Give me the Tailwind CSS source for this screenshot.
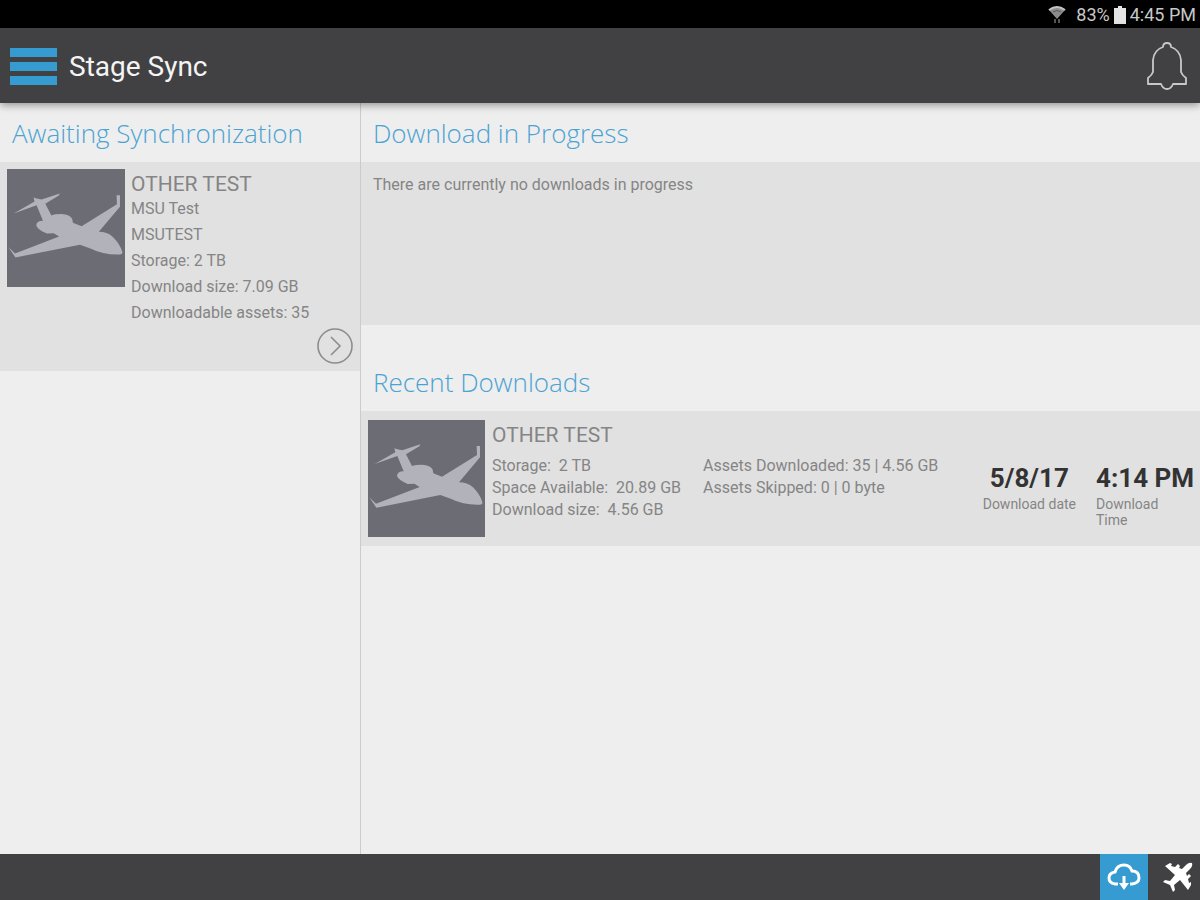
<!DOCTYPE html>
<html lang="en">
<head>
    <meta charset="UTF-8">
    <meta name="viewport" content="width=device-width, initial-scale=1.0">
    <title>Stage Sync</title>
    <!-- Tailwind CSS CDN -->
    <script src="https://cdn.jsdelivr.net/npm/@tailwindcss/browser@4"></script>
</head>
<body class="flex flex-col min-h-screen bg-[#eeeeee] font-['Roboto',sans-serif] text-[#858585]">
    <!-- Shared aircraft picture -->
    <svg class="hidden">
        <symbol id="jet" viewBox="0 0 351 351">
            <path fill="#b2b3ba" d="M20 132L82 97L79 85L88 88L103 91L157 73L154 79L114 103L132 138Q142 134 162 134Q188 136 194 149L196 160L222 170L327 105L326 78L336 78L336 112L273 187Q298 187 315 202Q336 223 343 246Q345 255 333 254Q285 255 250 237L217 225L25 263L4 232L24 251L155 201L139 191L119 192Q92 181 87 168Q87 154 107 154L88 108Z"/>
        </symbol>
    </svg>

    <!-- Status bar -->
    <div class="flex items-center justify-end h-7 px-1 pt-0.5 bg-black text-lg text-[#c8c8c8]">
        <svg class="w-5 h-5 mr-2" viewBox="0 0 20 20" fill="none">
            <path d="M1 5Q9 -1 17 5L9 14Z" fill="#8c8c8c"/>
            <path d="M1 5Q9 -1 17 5" stroke="#c4c4c4" stroke-width="2"/>
            <path d="M5 7Q9 4 13 7" stroke="#5a5a5a" stroke-width="1"/>
            <path d="M7 14V18M11 14V18" stroke="#555" stroke-width="2"/>
        </svg>
        <span>83%</span>
        <svg class="w-3 h-5 mx-1" viewBox="0 0 12 20" fill="#e4e4e4">
            <path d="M4 1H8V3H12V19H0V3H4Z"/>
        </svg>
        <span>4:45 PM</span>
    </div>

    <header class="relative z-10 flex items-center h-[75px] px-2.5 pt-0.5 bg-[#414143] shadow-[0_2px_8px_rgba(0,0,0,0.4)]">
        <button type="button" aria-label="Menu" class="flex flex-col gap-[5px] w-[47px]">
            <span class="h-[9px] w-full bg-[#359bd1]"></span>
            <span class="h-[9px] w-full bg-[#359bd1]"></span>
            <span class="h-[9px] w-full bg-[#359bd1]"></span>
        </button>
        <h1 class="ml-3 text-[28px] leading-9 text-[#f4f4f4]">Stage Sync</h1>
        <button type="button" aria-label="Notifications" class="ml-auto">
            <svg class="w-[44px] h-[50px]" viewBox="0 0 44 50" fill="none" stroke="#c8c8c8" stroke-width="1.8" stroke-linejoin="round">
                <path d="M17 5Q17 1 21 1Q25 1 25 5Q34 8 35 18V30Q36 33 40 36V42H27Q25 47 21 47Q17 47 15 42H2V36Q6 33 7 30V18Q8 8 17 5Z"/>
            </svg>
        </button>
    </header>

    <main class="flex flex-1">
        <section class="w-[30%] border-r border-[#cbcbcb] box-content">
            <h2 class="h-[59px] px-3 pt-3 font-['Open_Sans',sans-serif] font-light text-[26px] leading-9 text-[#4ba3d3]">Awaiting Synchronization</h2>
            <div class="flex flex-col bg-[#e1e1e1] px-[7px] py-[7px]">
                <div class="flex gap-1.5">
                    <svg class="size-[118px] bg-[#6b6c74]"><use href="#jet"/></svg>
                    <div class="pt-[3px] text-base leading-[26px]">
                        <h3 class="text-[21px] leading-6">OTHER TEST</h3>
                        <p>MSU Test</p>
                        <p>MSUTEST</p>
                        <p>Storage: 2 TB</p>
                        <p>Download size: 7.09 GB</p>
                        <p>Downloadable assets: 35</p>
                    </div>
                </div>
                <button type="button" aria-label="Open" class="self-end mt-0.5">
                    <svg class="size-9" viewBox="0 0 36 36" fill="none" stroke="#8d8d8d" stroke-width="1.6">
                        <circle cx="18" cy="18" r="17"/>
                        <path d="M14 9L23 18L14 27"/>
                    </svg>
                </button>
            </div>
        </section>

        <div class="flex-1">
            <section>
                <h2 class="h-[59px] px-3 pt-3 font-['Open_Sans',sans-serif] font-light text-[26px] leading-9 text-[#4ba3d3]">Download in Progress</h2>
                <p class="h-[163px] px-3 pt-3 bg-[#e1e1e1] text-base leading-[22px]">There are currently no downloads in progress</p>
            </section>
            <section class="pt-[27px]">
                <h2 class="h-[59px] px-3 pt-3 font-['Open_Sans',sans-serif] font-light text-[26px] leading-9 text-[#4ba3d3]">Recent Downloads</h2>
                <div class="flex bg-[#e1e1e1] pl-[7px] pr-2 py-2">
                    <svg class="size-[117px] my-px bg-[#6b6c74]"><use href="#jet"/></svg>
                    <div class="w-[211px] ml-[7px] pt-1 text-base leading-[22px]">
                        <h3 class="mb-2 text-[21px] leading-6">OTHER TEST</h3>
                        <p>Storage:&nbsp; 2 TB</p>
                        <p>Space Available:&nbsp; 20.89 GB</p>
                        <p>Download size:&nbsp; 4.56 GB</p>
                    </div>
                    <div class="pt-9 text-base leading-[22px]">
                        <p>Assets Downloaded: 35 | 4.56 GB</p>
                        <p>Assets Skipped: 0 | 0 byte</p>
                    </div>
                    <div class="flex gap-5 ml-auto pt-[43px] text-sm leading-4">
                        <div class="text-center">
                            <p class="mb-0.5 text-[26px] leading-8 font-bold text-[#333]">5/8/17</p>
                            <p>Download date</p>
                        </div>
                        <div class="w-24">
                            <p class="mb-0.5 text-[26px] leading-8 font-bold text-[#333] whitespace-nowrap">4:14 PM</p>
                            <p>Download<br>Time</p>
                        </div>
                    </div>
                </div>
            </section>
        </div>
    </main>

    <footer class="flex justify-end h-[46px] bg-[#414143]">
        <button type="button" aria-label="Downloads" class="flex items-center justify-center w-12 bg-[#359bd1]">
            <svg class="w-[34px] h-[30px]" viewBox="0 0 34 30" fill="none" stroke="#fff" stroke-width="3">
                <path d="M11 22H8Q2 21 2 16Q2 11 8 10Q10 3 17 3Q23 3 25 9Q32 9 32 16Q32 21 25 22H23"/>
                <path d="M17 14V24"/>
                <path d="M12 21H22L17 28Z" fill="#fff" stroke="none"/>
            </svg>
        </button>
        <button type="button" aria-label="Aircraft" class="flex items-center justify-center w-[52px] pl-2">
            <svg class="size-8" viewBox="0 0 32 32" fill="#fff">
                <path d="M30 2Q27 1 24 4L20 8L17 7L18 5L16 3L13 6L9 5L10 3L8 2L3 5L13 14L8 20L3 19L1 21L8 24L11 31L13 29L12 24L18 19L26 29L29 24L29 21L27 22L26 18L29 15L27 13L25 15L24 12L28 8Q31 5 30 2Z"/>
            </svg>
        </button>
    </footer>
</body>
</html>
